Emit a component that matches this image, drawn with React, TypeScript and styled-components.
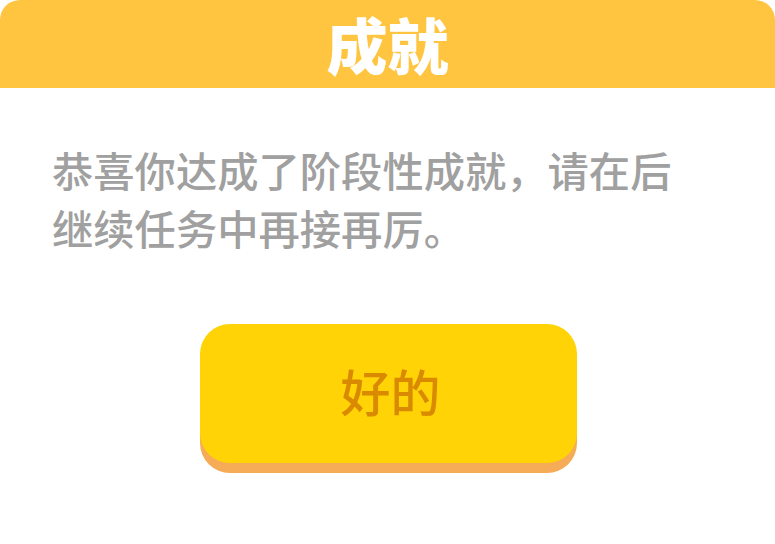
import React from "react";
import styled, { createGlobalStyle } from "styled-components";

const GlobalStyle = createGlobalStyle`
  html, body {
    margin: 0;
    padding: 0;
    background: #ffffff;
  }
  body {
    font-family: "Noto Sans CJK SC", "Noto Sans", sans-serif;
  }
`;

const Dialog = styled.div`
  width: 775px;
  height: 544px;
  background: #ffffff;
  display: flex;
  flex-direction: column;
`;

const Header = styled.div`
  height: 88px;
  background: #ffc540;
  border-radius: 20px 20px 0 0;
  display: flex;
  align-items: center;
  justify-content: center;
`;

const Title = styled.h1`
  margin: 0;
  color: #ffffff;
  font-size: 61px;
  font-weight: 900;
  line-height: 1;
  padding-bottom: 2px;
`;

const Body = styled.div`
  padding: 52px 52px 0;
  display: flex;
  flex-direction: column;
`;

const Message = styled.p`
  margin: 0;
  width: 640px;
  color: #a0a0a0;
  font-size: 41.3px;
  font-weight: 500;
  line-height: 58px;
`;

interface ButtonProps {
  readonly $face?: string;
  readonly $edge?: string;
}

const Button = styled.button<ButtonProps>`
  align-self: center;
  margin: 68px 0 0 2px;
  width: 377px;
  height: 139px;
  border: none;
  border-radius: 30px;
  background: ${(props) => props.$face || "#ffd305"};
  box-shadow: 0 10px 0 ${(props) => props.$edge || "#f6ac56"};
  color: #d98a00;
  font-family: inherit;
  font-size: 50px;
  font-weight: 500;
  line-height: 1;
  cursor: pointer;
  padding: 0 0 8px 4px;
`;

const App: React.FunctionComponent = () => {
  return (
    <>
      <GlobalStyle />
      <Dialog>
        <Header>
          <Title>成就</Title>
        </Header>
        <Body>
          <Message>恭喜你达成了阶段性成就，请在后继续任务中再接再厉。</Message>
          <Button>好的</Button>
        </Body>
      </Dialog>
    </>
  );
};

export default App;
